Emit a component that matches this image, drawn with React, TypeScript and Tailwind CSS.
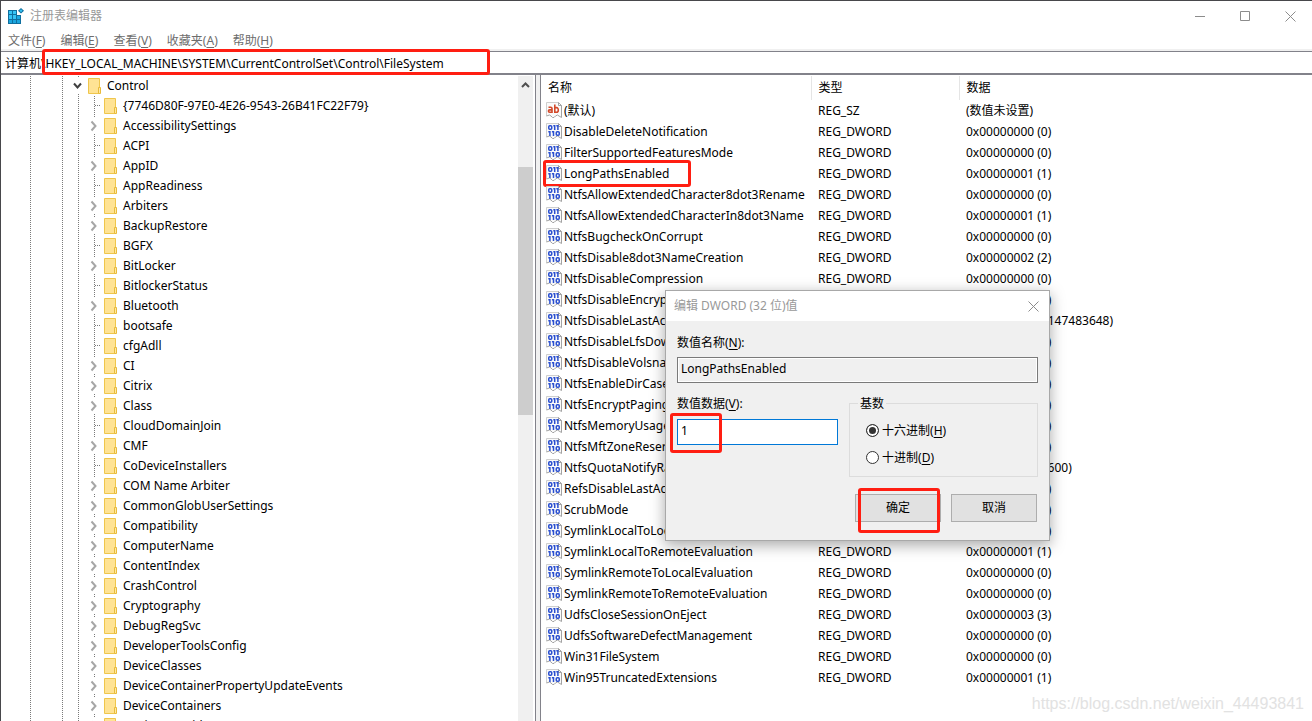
import React from "react";

type TreeItem = { name: string; expandable: boolean };

const leaf = (name: string): TreeItem => ({ name, expandable: false });
const node = (name: string): TreeItem => ({ name, expandable: true });

const treeItems: TreeItem[] = [
  leaf("{7746D80F-97E0-4E26-9543-26B41FC22F79}"),
  node("AccessibilitySettings"),
  leaf("ACPI"),
  node("AppID"),
  leaf("AppReadiness"),
  node("Arbiters"),
  node("BackupRestore"),
  leaf("BGFX"),
  node("BitLocker"),
  leaf("BitlockerStatus"),
  node("Bluetooth"),
  leaf("bootsafe"),
  leaf("cfgAdll"),
  node("CI"),
  node("Citrix"),
  node("Class"),
  leaf("CloudDomainJoin"),
  node("CMF"),
  leaf("CoDeviceInstallers"),
  node("COM Name Arbiter"),
  node("CommonGlobUserSettings"),
  node("Compatibility"),
  node("ComputerName"),
  node("ContentIndex"),
  node("CrashControl"),
  node("Cryptography"),
  node("DebugRegSvc"),
  node("DeveloperToolsConfig"),
  node("DeviceClasses"),
  node("DeviceContainerPropertyUpdateEvents"),
  node("DeviceContainers"),
  node("DeviceOverrides"),
];

const values: [string, string, string][] = [
  ["(默认)", "REG_SZ", "(数值未设置)"],
  ["DisableDeleteNotification", "REG_DWORD", "0x00000000 (0)"],
  ["FilterSupportedFeaturesMode", "REG_DWORD", "0x00000000 (0)"],
  ["LongPathsEnabled", "REG_DWORD", "0x00000001 (1)"],
  ["NtfsAllowExtendedCharacter8dot3Rename", "REG_DWORD", "0x00000000 (0)"],
  ["NtfsAllowExtendedCharacterIn8dot3Name", "REG_DWORD", "0x00000001 (1)"],
  ["NtfsBugcheckOnCorrupt", "REG_DWORD", "0x00000000 (0)"],
  ["NtfsDisable8dot3NameCreation", "REG_DWORD", "0x00000002 (2)"],
  ["NtfsDisableCompression", "REG_DWORD", "0x00000000 (0)"],
  ["NtfsDisableEncryption", "REG_DWORD", "0x00000000 (0)"],
  ["NtfsDisableLastAccessUpdate", "REG_DWORD", "0x80000000 (2147483648)"],
  ["NtfsDisableLfsDowngrade", "REG_DWORD", "0x00000000 (0)"],
  ["NtfsDisableVolsnapHints", "REG_DWORD", "0x00000000 (0)"],
  ["NtfsEnableDirCaseSensitivity", "REG_DWORD", "0x00000000 (0)"],
  ["NtfsEncryptPagingFile", "REG_DWORD", "0x00000000 (0)"],
  ["NtfsMemoryUsage", "REG_DWORD", "0x00000000 (0)"],
  ["NtfsMftZoneReservation", "REG_DWORD", "0x00000000 (0)"],
  ["NtfsQuotaNotifyRate", "REG_DWORD", "0x00000e10 (3600)"],
  ["RefsDisableLastAccessUpdate", "REG_DWORD", "0x00000001 (1)"],
  ["ScrubMode", "REG_DWORD", "0x00000002 (2)"],
  ["SymlinkLocalToLocalEvaluation", "REG_DWORD", "0x00000001 (1)"],
  ["SymlinkLocalToRemoteEvaluation", "REG_DWORD", "0x00000001 (1)"],
  ["SymlinkRemoteToLocalEvaluation", "REG_DWORD", "0x00000000 (0)"],
  ["SymlinkRemoteToRemoteEvaluation", "REG_DWORD", "0x00000000 (0)"],
  ["UdfsCloseSessionOnEject", "REG_DWORD", "0x00000003 (3)"],
  ["UdfsSoftwareDefectManagement", "REG_DWORD", "0x00000000 (0)"],
  ["Win31FileSystem", "REG_DWORD", "0x00000000 (0)"],
  ["Win95TruncatedExtensions", "REG_DWORD", "0x00000001 (1)"],
];

const menus: [string, string][] = [
  ["文件", "F"],
  ["编辑", "E"],
  ["查看", "V"],
  ["收藏夹", "A"],
  ["帮助", "H"],
];

function AccessKey({ letter }: { letter: string }) {
  return (
    <>
      (<span className="underline underline-offset-2">{letter}</span>)
    </>
  );
}

function RegeditIcon() {
  return (
    <svg width="16" height="16" viewBox="0 0 16 16" className="shrink-0" aria-hidden="true">
      <path d="M0 2h9v5h4v9H0z" fill="#0f6f9f" />
      <path d="M1 3h3v3H1zM5 3h3v3H5zM1 7h3v4H1zM5 7h3v4H5z" fill="#35c4f5" />
      <path d="M9 8h3v3H9zM1 12h3v3H1zM5 12h3v3H5zM9 12h3v3H9z" fill="#1ba6df" />
      <path d="M13 0l3 2.800-3 2.800-3-2.800z" fill="#0f6f9f" />
      <path d="M13 1.300l1.500 1.500L13 4.300l-1.500-1.500z" fill="#35c4f5" />
    </svg>
  );
}

function FolderIcon() {
  return (
    <svg width="13" height="16" viewBox="0 0 13 16" className="shrink-0" aria-hidden="true">
      <path d="M0.500 0.500h11v15h-11z" fill="#ffe394" stroke="#efc64c" />
      <path d="M10.500 9.500h2v6h-2z" fill="#ffe9a6" stroke="#e9bb3a" />
    </svg>
  );
}

function Guides({ expandable }: { expandable: boolean }) {
  return (
    <svg width="103" height="20" viewBox="0 0 103 20" className="shrink-0" aria-hidden="true">
      <g stroke="#7a7a7a" strokeDasharray="1 1" fill="none">
        <path d="M29.500 0v20M61.500 0v20M77.500 0v20" />
        {expandable ? <path d="M93.500 0v2M93.500 18v2" /> : <path d="M93.500 0v20M94 9.500h6" />}
      </g>
      {expandable && <path d="M90.500 5.500L94.500 10l-4 4.500" fill="none" stroke="#a6a6a6" strokeWidth="2" />}
    </svg>
  );
}

function RootGuides() {
  return (
    <svg width="87" height="20" viewBox="0 0 87 20" className="shrink-0" aria-hidden="true">
      <path d="M29.500 0v20M61.500 0v20M77.500 0v2M77.500 18v2" stroke="#7a7a7a" strokeDasharray="1 1" />
      <path d="M73 7.500l3.500 4 3.500-4" fill="none" stroke="#404040" strokeWidth="2" />
    </svg>
  );
}

function ValueIcon({ text }: { text: boolean }) {
  return (
    <svg width="16" height="16" viewBox="0 0 16 16" className="mb-[1px] shrink-0" aria-hidden="true">
      <path d="M0.500 0.500h12l3 3v12l-2-1-2-1.500-2 1-1.500 1.500H6.500L5 14l-1.500-1-3 1z" fill="#fafafa" />
      <path d="M0.500 14V0.500h12" fill="none" stroke="#cfcfcf" />
      <path d="M12.500 0.500v3h3M12.500 0.500l3 3v12L13 14l-1.500-1-2 1L8 15.500H6.500L5 14l-1.500-1-3 1" fill="none" stroke="#a3a3a3" />
      {text ? (
        <g fill="none" stroke="#d2492a" strokeWidth="1.600">
          <path d="M2.500 5.300h2.200q1.300 0 1.300 1.200v3.800H3.700c-1.700 0-1.700-2.400 0-2.400H6" />
          <path d="M8.800 2.500v7.800h1.700c2.400 0 2.400-4.700 0-4.700H8.800" />
        </g>
      ) : (
        <g fill="none" stroke="#2a4fd0" strokeWidth="1.500">
          <rect x="2.750" y="2.750" width="3" height="3.500" rx="1" />
          <rect x="10.250" y="8.750" width="3" height="3.500" rx="1" />
          <path d="M7.300 2.700H8.700V7M10.300 2.700H11.900V7M2.300 8.700H3.900V13M5.900 8.700H7.500V13" />
        </g>
      )}
    </svg>
  );
}

function CloseIcon() {
  return (
    <svg width="11" height="11" viewBox="0 0 11 11" aria-hidden="true">
      <path d="M0.500 0.500l10 10M10.500 0.500l-10 10" stroke="#8c8c8c" fill="none" />
    </svg>
  );
}

function BaseOption({ label, letter, checked }: { label: string; letter: string; checked?: boolean }) {
  return (
    <label className="flex h-[27px] items-center gap-[3px]">
      <input
        type="radio"
        name="base"
        defaultChecked={checked}
        className="m-0 size-[13px] appearance-none rounded-full border border-[#333] bg-white checked:bg-[#333] checked:shadow-[inset_0_0_0_2px_white]"
      />
      <span>
        {label}
        <AccessKey letter={letter} />
      </span>
    </label>
  );
}

function EditDialog() {
  return (
    <section
      role="dialog"
      aria-label="编辑 DWORD (32 位)值"
      className="absolute left-[664px] top-[289px] w-[385px] border border-[#a8a8a8] bg-[#f0f0f0] shadow-[0_4px_14px_rgba(0,0,0,0.35)]"
    >
      <header className="flex h-[30px] items-center justify-between bg-white pl-2 pr-[10px] text-[#999]">
        <h2>编辑 DWORD (32 位)值</h2>
        <button type="button" aria-label="关闭">
          <CloseIcon />
        </button>
      </header>
      <form className="flex flex-col px-[11px] pb-[18px] pt-3" onSubmit={(e) => e.preventDefault()}>
        <label htmlFor="value-name" className="h-6 leading-[20px]">
          数值名称(<span className="underline underline-offset-2">N</span>):
        </label>
        <input
          id="value-name"
          readOnly
          defaultValue="LongPathsEnabled"
          className="h-[26px] w-full border border-[#7a7a7a] bg-[#f0f0f0] px-[3px] pb-[3px] shadow-[inset_0_0_0_1px_white] outline-none"
        />
        <div className="mt-[10px] flex justify-between">
          <div className="flex w-[161px] flex-col">
            <label htmlFor="value-data" className="h-[26px] leading-[22px]">
              数值数据(<span className="underline underline-offset-2">V</span>):
            </label>
            <div className="relative">
              <input
                id="value-data"
                defaultValue="1"
                className="block h-[26px] w-full border border-[#0078d7] bg-white px-[3px] pb-[3px] outline-none"
              />
              <span className="pointer-events-none absolute -left-[7px] -top-[6px] h-10 w-[52px] rounded-[3px] border-3 border-[#ff1e12]" />
            </div>
          </div>
          <fieldset className="h-[84px] w-[189px] border border-[#dcdcdc] pl-4">
            <legend className="-ml-2 h-5 px-[2px] leading-[22px]">基数</legend>
            <div className="flex flex-col pt-[4px]">
              <BaseOption label="十六进制" letter="H" checked />
              <BaseOption label="十进制" letter="D" />
            </div>
          </fieldset>
        </div>
        <div className="mt-[17px] flex justify-end gap-[10px] pr-[1px]">
          <div className="relative">
            <button type="submit" className="h-7 w-[86px] border border-[#adadad] bg-[#e1e1e1]">
              确定
            </button>
            <span className="pointer-events-none absolute -top-[6px] left-[3px] h-[45px] w-[82px] rounded-[3px] border-3 border-[#ff1e12]" />
          </div>
          <button type="button" className="h-7 w-[86px] border border-[#adadad] bg-[#e1e1e1]">
            取消
          </button>
        </div>
      </form>
    </section>
  );
}

export default function App() {
  return (
    <div className="relative flex h-screen flex-col overflow-hidden border-l border-t border-[#47474b] bg-white font-['Noto_Sans','Noto_Sans_CJK_SC',sans-serif] text-[12px] leading-[18px] text-black">
      <header className="flex h-[30px] shrink-0 items-center justify-between pl-[7px] pr-[16px] text-[#999]">
        <div className="flex items-center gap-[6px]">
          <RegeditIcon />
          <h1>注册表编辑器</h1>
        </div>
        <div className="flex items-center gap-[35px]">
          <button type="button" aria-label="最小化">
            <svg width="10" height="10" viewBox="0 0 10 10" aria-hidden="true">
              <path d="M0 5.500h10" stroke="#8c8c8c" />
            </svg>
          </button>
          <button type="button" aria-label="最大化">
            <svg width="10" height="10" viewBox="0 0 10 10" aria-hidden="true">
              <path d="M0.500 0.500h9v9h-9z" fill="none" stroke="#8c8c8c" />
            </svg>
          </button>
          <button type="button" aria-label="关闭">
            <CloseIcon />
          </button>
        </div>
      </header>

      <nav className="flex h-[18px] shrink-0 items-center gap-[15px] pl-[7px] pt-[2px] text-[#6d6d6d]">
        {menus.map(([label, letter]) => (
          <button key={letter} type="button">
            {label}
            <AccessKey letter={letter} />
          </button>
        ))}
      </nav>

      <div className="relative shrink-0 border-t-2 border-[#f0f0f0]">
        <input
          aria-label="地址"
          defaultValue="计算机\HKEY_LOCAL_MACHINE\SYSTEM\CurrentControlSet\Control\FileSystem"
          className="block h-6 w-full border-b-2 border-t border-[#82828a] bg-white pl-1 outline-none"
        />
        <span className="pointer-events-none absolute -top-[2px] left-[41px] h-[26px] w-[448px] rounded-[3px] border-3 border-[#ff1e12]" />
      </div>

      <main className="flex min-h-0 flex-1">
        <nav className="flex w-[535px] shrink-0 border-r border-[#82828a]" aria-label="注册表项">
          <ul className="min-w-0 flex-1 overflow-hidden pt-[1px]">
            <li className="flex h-5 items-center">
              <RootGuides />
              <FolderIcon />
              <span className="pl-[6px]">Control</span>
            </li>
            {treeItems.map((item) => (
              <li key={item.name} className="flex h-5 items-center">
                <Guides expandable={item.expandable} />
                <FolderIcon />
                <span className="whitespace-nowrap pl-[6px]">{item.name}</span>
              </li>
            ))}
          </ul>
          <div className="mr-[2px] mt-[1px] flex w-[15px] flex-col items-center bg-[#f0f0f0]">
            <svg width="9" height="6" viewBox="0 0 9 6" className="mt-[6px] shrink-0" aria-hidden="true">
              <path d="M1 5l3.500-3.500L8 5" fill="none" stroke="#505050" strokeWidth="2" />
            </svg>
            <div className="mt-[79px] h-[248px] w-full shrink-0 bg-[#cdcdcd]" />
          </div>
        </nav>
        <div className="w-1 shrink-0 bg-[#f0f0f0]" />
        <div className="min-w-0 flex-1 overflow-hidden border-l border-[#82828a] pt-[1px]">
          <table className="w-full table-fixed border-collapse text-left">
            <colgroup>
              <col className="w-[270px]" />
              <col className="w-[148px]" />
              <col />
            </colgroup>
            <thead>
              <tr className="h-6">
                <th className="border-r border-[#e5e5e5] p-0 pl-[7px] font-normal">名称</th>
                <th className="border-r border-[#e5e5e5] p-0 pl-[7px] font-normal">类型</th>
                <th className="p-0 pl-[7px] font-normal">数据</th>
              </tr>
            </thead>
            <tbody>
              {values.map(([name, type, data], i) => (
                <tr key={name} className="h-[21px]">
                  <td className="p-0 pl-[5px]">
                    <span className="relative flex items-center gap-[2px] whitespace-nowrap">
                      <ValueIcon text={i === 0} />
                      {name}
                      {name === "LongPathsEnabled" && (
                        <span className="pointer-events-none absolute -left-[3px] -top-[5px] h-[27px] w-[148px] rounded-[3px] border-3 border-[#ff1e12]" />
                      )}
                    </span>
                  </td>
                  <td className="p-0 pl-[7px]">{type}</td>
                  <td className="whitespace-nowrap p-0 pl-[7px]">{data}</td>
                </tr>
              ))}
            </tbody>
          </table>
        </div>
      </main>

      <EditDialog />

      <footer className="pointer-events-none absolute bottom-2 right-2 font-['Liberation_Sans',sans-serif] text-[16px] text-[#e2e2e2]">
        https://blog.csdn.net/weixin_44493841
      </footer>
    </div>
  );
}
